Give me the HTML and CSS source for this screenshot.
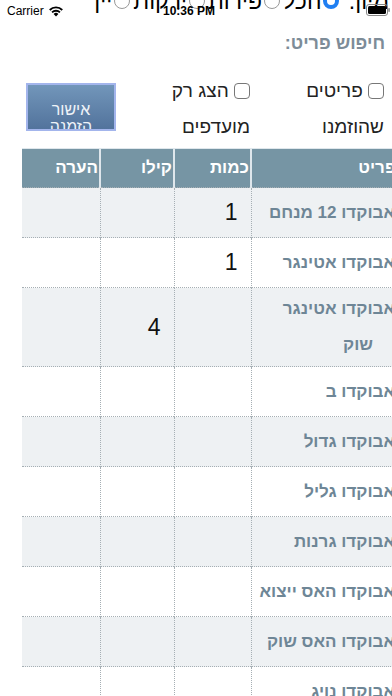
FILE: index.html
```html
<!DOCTYPE html>
<html lang="he">
<head>
<meta charset="utf-8">
<link rel="stylesheet" href="styles.css">
</head>
<body>
<div class="status">
  <div class="carrier">Carrier
    <svg class="wifi" width="16" height="12" viewBox="0 0 16 12"><path d="M8 11.5 L5.6 8.9 A3.4 3.4 0 0 1 10.4 8.9 Z" fill="#000"/><path d="M3.4 6.7 A6.6 6.6 0 0 1 12.6 6.7 L11.3 8.1 A4.7 4.7 0 0 0 4.7 8.1 Z" fill="#000"/><path d="M1.1 4.3 A9.8 9.8 0 0 1 14.9 4.3 L13.6 5.7 A7.9 7.9 0 0 0 2.4 5.7 Z" fill="#000"/></svg>
  </div>
  <div class="clock">10:36 PM</div>
  <svg class="battery" width="24" height="12" viewBox="0 0 24 12"><rect x="0.5" y="0.5" width="21" height="11" rx="2.5" fill="none" stroke="#888"/><rect x="2" y="2" width="18" height="8" rx="1.5" fill="#000"/><rect x="22.3" y="4" width="1.5" height="4" rx="0.7" fill="#888"/></svg>
</div>

<div class="page" dir="rtl">
  <div class="filter-line">מיון: <span class="radio on"></span>הכל<span class="radio"></span>פירות<span class="radio"></span>ירקות<span class="radio"></span>יין</div>

  <div class="search-label">חיפוש פריט:</div>

  <div class="options">
    <label class="opt opt-ordered"><span class="box"></span> פריטים שהוזמנו</label>
    <label class="opt opt-fav"><span class="box"></span> הצג רק מועדפים</label>
    <div class="spacer"></div>
    <button class="confirm">אישור<br>הזמנה</button>
  </div>

  <table class="items">
    <colgroup><col class="w-name"><col class="w-qty"><col class="w-kg"><col class="w-note"></colgroup>
    <thead>
      <tr><th>פריט</th><th>כמות</th><th>קילו</th><th>הערה</th></tr>
    </thead>
    <tbody>
      <tr class="alt"><td class="name">אבוקדו 12 מנחם</td><td class="num">1</td><td class="num"></td><td></td></tr>
      <tr><td class="name">אבוקדו אטינגר</td><td class="num">1</td><td class="num"></td><td></td></tr>
      <tr class="alt"><td class="name">אבוקדו אטינגר<br><span class="second">שוק</span></td><td class="num"></td><td class="num">4</td><td></td></tr>
      <tr><td class="name">אבוקדו ב</td><td class="num"></td><td class="num"></td><td></td></tr>
      <tr class="alt"><td class="name">אבוקדו גדול</td><td class="num"></td><td class="num"></td><td></td></tr>
      <tr><td class="name">אבוקדו גליל</td><td class="num"></td><td class="num"></td><td></td></tr>
      <tr class="alt"><td class="name">אבוקדו גרנות</td><td class="num"></td><td class="num"></td><td></td></tr>
      <tr><td class="name">אבוקדו האס ייצוא</td><td class="num"></td><td class="num"></td><td></td></tr>
      <tr class="alt"><td class="name">אבוקדו האס שוק</td><td class="num"></td><td class="num"></td><td></td></tr>
      <tr><td class="name">אבוקדו נויג</td><td class="num"></td><td class="num"></td><td></td></tr>
    </tbody>
  </table>
</div>
</body>
</html>
```
FILE: styles.css
```css
html, body {
  margin: 0;
  padding: 0;
  width: 392px;
  height: 696px;
  overflow: hidden;
  background: #fff;
  font-family: "Liberation Sans", Arial, sans-serif;
}

.status {
  position: absolute;
  top: 0;
  left: 0;
  width: 392px;
  height: 20px;
  z-index: 5;
  font-size: 12px;
  color: #000;
}
.carrier {
  position: absolute;
  left: 7px;
  top: 4px;
  display: flex;
  align-items: center;
  gap: 4px;
}
.clock {
  position: absolute;
  left: 163px;
  top: 4px;
  font-weight: bold;
}
.battery {
  position: absolute;
  right: 2px;
  top: 4px;
}

.page {
  display: flex;
  flex-direction: column;
}

.filter-line {
  font-size: 23px;
  line-height: 32px;
  height: 32px;
  margin-top: -15px;
  white-space: nowrap;
  color: #000;
  padding-right: 3px;
}
.radio {
  display: inline-block;
  width: 16px;
  height: 16px;
  margin: 0 3px 0 2px;
  border: 1px solid #999;
  border-radius: 50%;
  box-sizing: border-box;
  vertical-align: 0;
}
.radio.on {
  border: 4px solid #1f7ff2;
}

.search-label {
  margin-top: 16px;
  padding-right: 7px;
  font-size: 18px;
  font-weight: bold;
  color: #7d8c98;
  line-height: 20px;
}

.options {
  display: flex;
  align-items: flex-start;
  margin-top: 30px;
  padding-right: 8px;
  height: 65px;
}
.opt {
  font-size: 19px;
  line-height: 36px;
  color: #222;
  margin-top: -10px;
}
.opt-ordered { width: 84px; }
.opt-fav { width: 88px; margin-right: 50px; }
.box {
  display: inline-block;
  width: 16px;
  height: 16px;
  border: 1px solid #777;
  border-radius: 4px;
  box-sizing: border-box;
  vertical-align: -2px;
}
.spacer { flex: 1; }
.confirm {
  width: 90px;
  height: 48px;
  margin-left: 26px;
  padding: 16px 0 0;
  border: 2px solid #a3b5ec;
  background: linear-gradient(#7296ba, #52739c);
  color: #eef3f8;
  font-family: "Liberation Sans", Arial, sans-serif;
  font-size: 16px;
  line-height: 17px;
  overflow: hidden;
}

.items {
  margin-left: 22px;
  width: 375px;
  border-collapse: collapse;
  table-layout: fixed;
  align-self: flex-end;
  margin-right: -5px;
}
.w-name { width: 146px; }
.w-qty { width: 77px; }
.w-kg { width: 74px; }
.w-note { width: 78px; }

.items th {
  background: #7695a4;
  color: #fff;
  font-size: 17px;
  font-weight: bold;
  text-align: right;
  height: 38px;
  padding: 0 1px 0 0;
  border-left: 2px solid #dfe7ec;
  border-right: 2px solid #dfe7ec;
  border-top: 1px solid #dfe7ec;
}
.items th:last-child { border-left: 0; }
.items th:first-child { border-right: 0; }

.items tbody tr { height: 50px; }
.items td {
  padding: 0;
  border: 1px dotted #a6afb4;
  vertical-align: middle;
}
.items td:last-child { border-left: 0; }
.items td:first-child { border-right: 0; }
.items tr.alt td { background: #eef1f3; }
.items td.name {
  text-align: right;
  font-size: 17px;
  font-weight: bold;
  color: #6e8696;
  line-height: 36px;
  padding: 3px 2px 3px 0;
}
.items td.num {
  text-align: right;
  padding-right: 13px;
  font-size: 23px;
  color: #111;
}
.second { padding-right: 22px; }
```
